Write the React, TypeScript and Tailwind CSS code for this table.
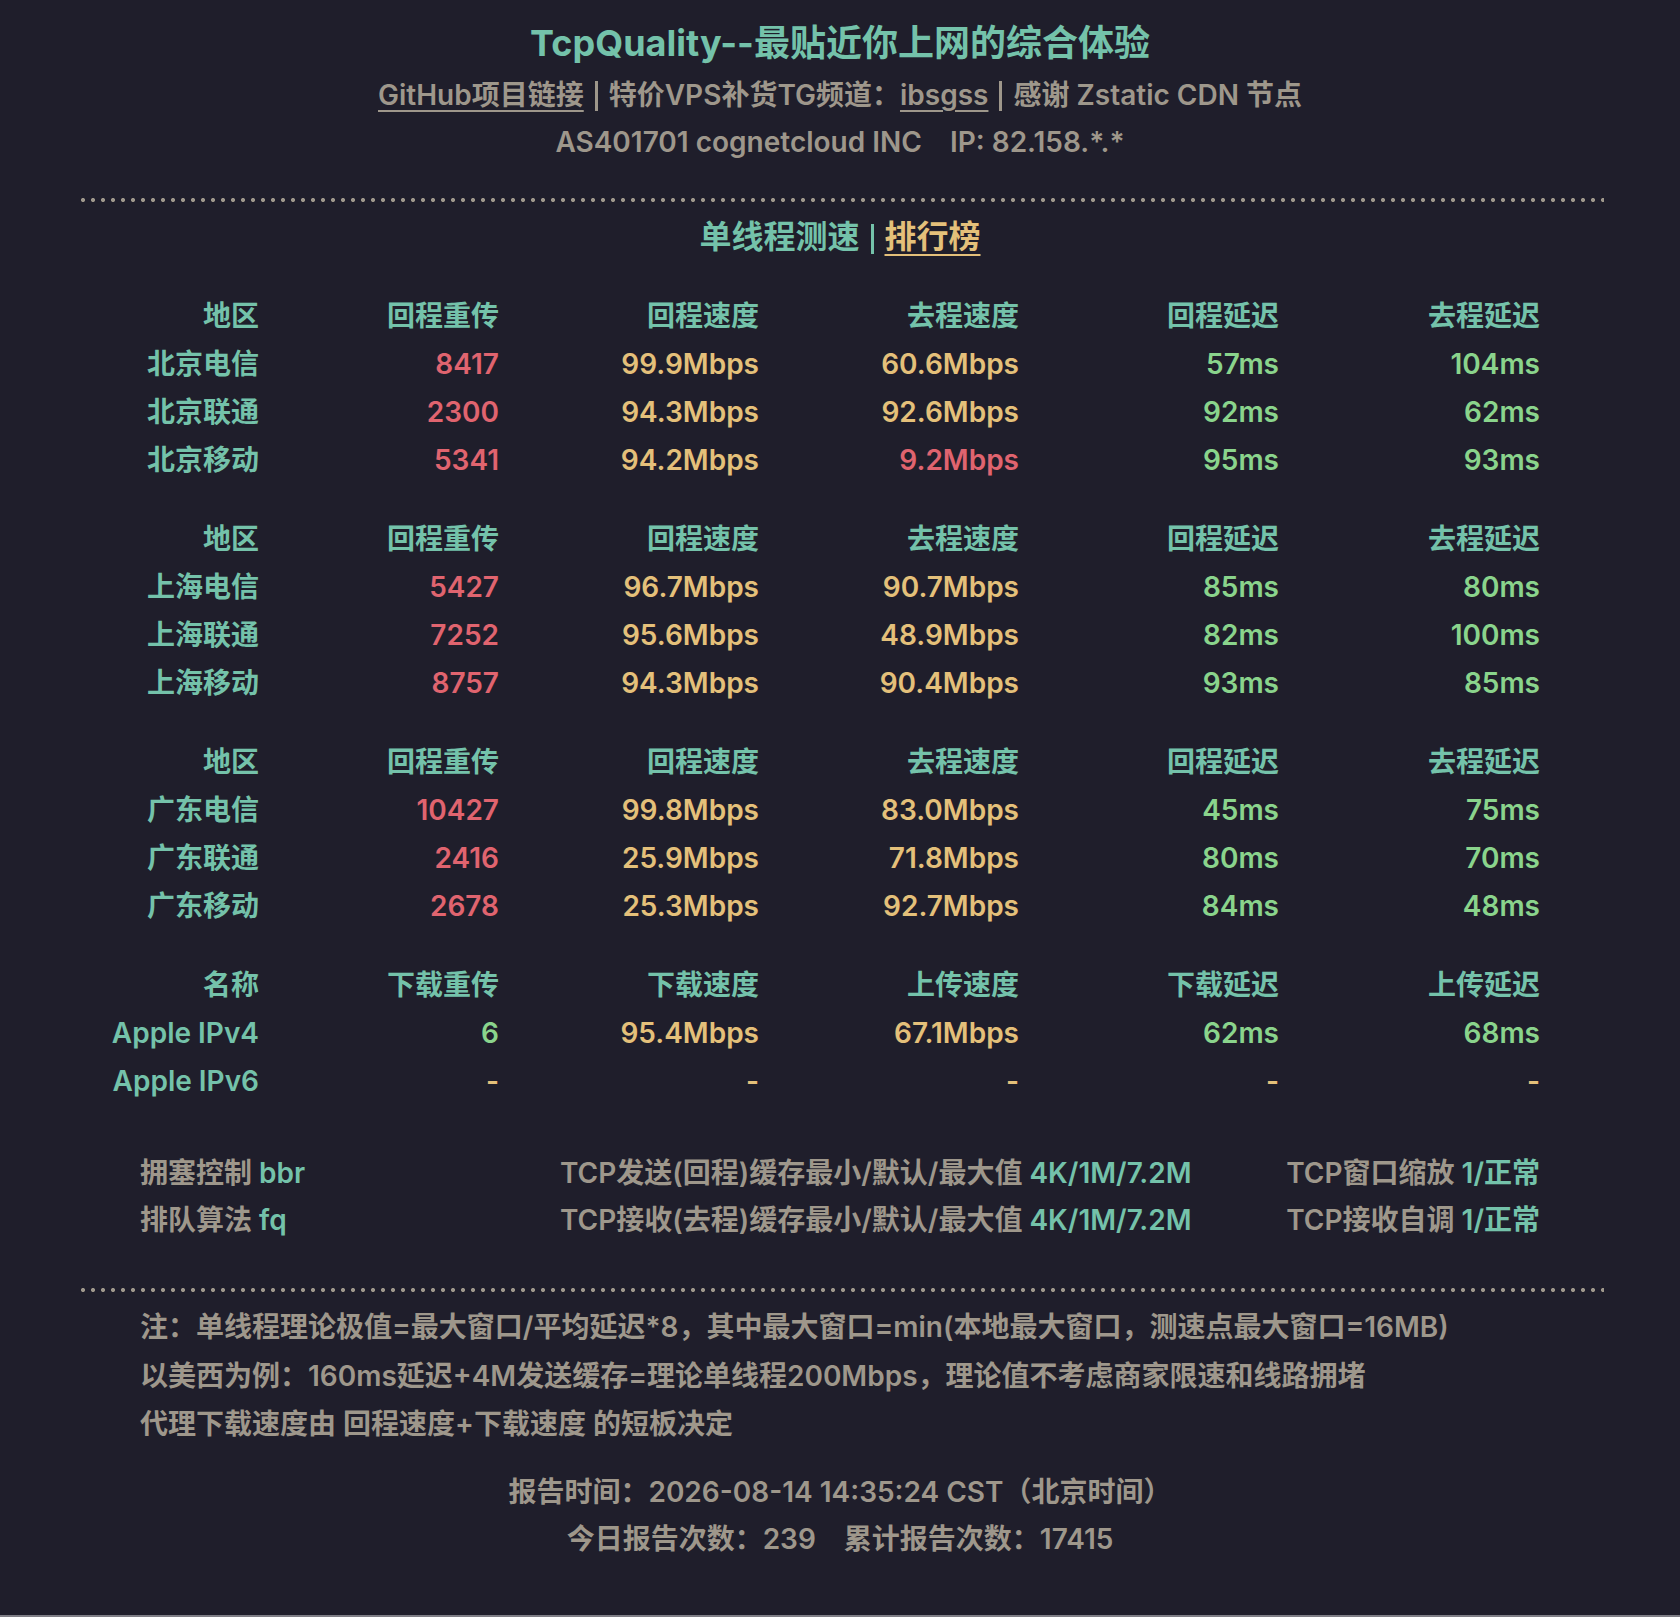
import React from "react";

type Tone = "r" | "y" | "g";
const toneClass: Record<Tone, string> = {
  r: "text-[#e0646f]",
  y: "text-[#e4c07a]",
  g: "text-[#8ad48c]",
};

type Cell = [string, Tone];
type Group = { head: string[]; rows: [string, Cell[]][] };

const headA = ["地区", "回程重传", "回程速度", "去程速度", "回程延迟", "去程延迟"];

const groups: Group[] = [
  {
    head: headA,
    rows: [
      ["北京电信", [["8417", "r"], ["99.9Mbps", "y"], ["60.6Mbps", "y"], ["57ms", "g"], ["104ms", "g"]]],
      ["北京联通", [["2300", "r"], ["94.3Mbps", "y"], ["92.6Mbps", "y"], ["92ms", "g"], ["62ms", "g"]]],
      ["北京移动", [["5341", "r"], ["94.2Mbps", "y"], ["9.2Mbps", "r"], ["95ms", "g"], ["93ms", "g"]]],
    ],
  },
  {
    head: headA,
    rows: [
      ["上海电信", [["5427", "r"], ["96.7Mbps", "y"], ["90.7Mbps", "y"], ["85ms", "g"], ["80ms", "g"]]],
      ["上海联通", [["7252", "r"], ["95.6Mbps", "y"], ["48.9Mbps", "y"], ["82ms", "g"], ["100ms", "g"]]],
      ["上海移动", [["8757", "r"], ["94.3Mbps", "y"], ["90.4Mbps", "y"], ["93ms", "g"], ["85ms", "g"]]],
    ],
  },
  {
    head: headA,
    rows: [
      ["广东电信", [["10427", "r"], ["99.8Mbps", "y"], ["83.0Mbps", "y"], ["45ms", "g"], ["75ms", "g"]]],
      ["广东联通", [["2416", "r"], ["25.9Mbps", "y"], ["71.8Mbps", "y"], ["80ms", "g"], ["70ms", "g"]]],
      ["广东移动", [["2678", "r"], ["25.3Mbps", "y"], ["92.7Mbps", "y"], ["84ms", "g"], ["48ms", "g"]]],
    ],
  },
];

const appleHead = ["名称", "下载重传", "下载速度", "上传速度", "下载延迟", "上传延迟"];
const appleRows: [string, Cell[]][] = [
  ["Apple IPv4", [["6", "g"], ["95.4Mbps", "y"], ["67.1Mbps", "y"], ["62ms", "g"], ["68ms", "g"]]],
  ["Apple IPv6", [["-", "y"], ["-", "y"], ["-", "y"], ["-", "y"], ["-", "y"]]],
];

function Dots() {
  return (
    <div className="h-[4px] w-full bg-[radial-gradient(circle,#9e978b_1.8px,transparent_2.3px)] bg-[length:10px_4px] bg-repeat-x bg-[position:2px_0]" />
  );
}

function Bar({ color }: { color: string }) {
  return <span className={`inline-block w-[3px] h-[30px] align-[-6px] mx-[11px] ${color}`} />;
}

function TableGroup({ head, rows, last }: { head: string[]; rows: [string, Cell[]][]; last?: boolean }) {
  return (
    <div
      className={`ml-[24px] w-[1440px] grid grid-cols-[159px_240px_260px_260px_260px_261px] ${
        last ? "" : "mb-[31px]"
      }`}
    >
      {head.map((h) => (
        <div key={h} className="h-[48px] leading-[48px] text-right text-[#74c2aa]">
          {h}
        </div>
      ))}
      {rows.map(([name, cells]) => (
        <React.Fragment key={name}>
          <div className="h-[48px] leading-[48px] text-right text-[#74c2aa] whitespace-nowrap">{name}</div>
          {cells.map(([v, t], i) => (
            <div key={i} className={`h-[48px] leading-[48px] text-right ${toneClass[t]}`}>
              {v}
            </div>
          ))}
        </React.Fragment>
      ))}
    </div>
  );
}

export default function App() {
  return (
    <div className="bg-[#7f7e86] min-h-[1617px] font-['Inter','Noto_Sans_CJK_SC',sans-serif] font-semibold">
      <div className="h-[1615px] bg-[#1f1e2b] px-[76px] pt-[19px] text-[28px] text-[#9e978b]">
        <h1 className="text-center text-[36px] leading-[48px] font-bold text-[#74c2aa]">
          TcpQuality--最贴近你上网的综合体验
        </h1>
        <div className="mt-[5px] text-center leading-[47px]">
          <span className="underline decoration-2 underline-offset-[5px]">GitHub项目链接</span>
          <Bar color="bg-[#9e978b]" />
          特价VPS补货TG频道：
          <span className="underline decoration-2 underline-offset-[5px]">ibsgss</span>
          <Bar color="bg-[#9e978b]" />
          感谢 Zstatic CDN 节点
        </div>
        <div className="text-center leading-[47px]">
          AS401701 cognetcloud INC<span className="inline-block w-[28px]" />IP: 82.158.*.*
        </div>

        <div className="mt-[32px]">
          <Dots />
        </div>

        <div className="mt-[11px] text-center text-[32px] leading-[48px] text-[#74c2aa]">
          单线程测速
          <Bar color="bg-[#74c2aa]" />
          <span className="text-[#e4c07a] underline decoration-2 underline-offset-[6px]">排行榜</span>
        </div>

        <div className="mt-[31px]">
          {groups.map((g, i) => (
            <TableGroup key={i} head={g.head} rows={g.rows} />
          ))}
          <TableGroup head={appleHead} rows={appleRows} last />
        </div>

        <div className="mt-[45px] ml-[64px] w-[1400px] grid grid-cols-[420px_1fr_auto] leading-[47px] whitespace-nowrap">
          <div>
            拥塞控制 <span className="text-[#74c2aa]">bbr</span>
          </div>
          <div>
            TCP发送(回程)缓存最小/默认/最大值 <span className="text-[#74c2aa]">4K/1M/7.2M</span>
          </div>
          <div className="text-right">
            TCP窗口缩放 <span className="text-[#74c2aa]">1/正常</span>
          </div>
          <div>
            排队算法 <span className="text-[#74c2aa]">fq</span>
          </div>
          <div>
            TCP接收(去程)缓存最小/默认/最大值 <span className="text-[#74c2aa]">4K/1M/7.2M</span>
          </div>
          <div className="text-right">
            TCP接收自调 <span className="text-[#74c2aa]">1/正常</span>
          </div>
        </div>

        <div className="mt-[44px]">
          <Dots />
        </div>

        <div className="mt-[11px] ml-[64px] leading-[48.5px] whitespace-nowrap">
          <div>注：单线程理论极值=最大窗口/平均延迟*8，其中最大窗口=min(本地最大窗口，测速点最大窗口=16MB)</div>
          <div>以美西为例：160ms延迟+4M发送缓存=理论单线程200Mbps，理论值不考虑商家限速和线路拥堵</div>
          <div>代理下载速度由 回程速度+下载速度 的短板决定</div>
        </div>

        <div className="mt-[20px] text-center leading-[47px]">
          <div>报告时间：2026-08-14 14:35:24 CST（北京时间）</div>
          <div>
            今日报告次数：239<span className="inline-block w-[28px]" />累计报告次数：17415
          </div>
        </div>
      </div>
    </div>
  );
}
